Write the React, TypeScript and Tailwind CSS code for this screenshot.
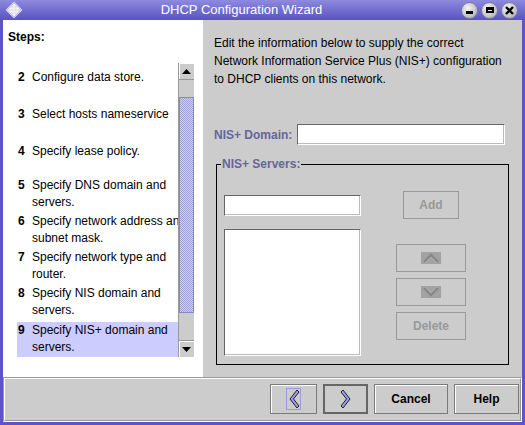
import React from 'react'

const steps = [
  { n: 2, lines: ['Configure data store.'], h: 37 },
  { n: 3, lines: ['Select hosts nameservice'], h: 37 },
  { n: 4, lines: ['Specify lease policy.'], h: 34 },
  { n: 5, lines: ['Specify DNS domain and', 'servers.'], h: 36 },
  { n: 6, lines: ['Specify network address and', 'subnet mask.'], h: 36 },
  { n: 7, lines: ['Specify network type and', 'router.'], h: 36 },
  { n: 8, lines: ['Specify NIS domain and', 'servers.'], h: 37 },
  { n: 9, lines: ['Specify NIS+ domain and', 'servers.'], h: 36, active: true },
]

function WinButton({ children }: { children: React.ReactNode }) {
  return (
    <div className="flex h-[17px] w-[17px] items-center justify-center rounded-full border border-[#7c7aa8] bg-[radial-gradient(circle_at_40%_35%,#f4f4f4,#c4c4c8_60%,#9a9aa4)]">
      {children}
    </div>
  )
}

function Chevron({ dir }: { dir: 'left' | 'right' }) {
  const pts =
    dir === 'left'
      ? '9,1 2,10 9,19 11,17 5.5,10 11,3'
      : '3,1 10,10 3,19 1,17 6.5,10 1,3'
  return (
    <svg width="12" height="20" viewBox="0 0 12 20">
      <polygon points={pts} fill="#9a9af2" stroke="#222" strokeWidth="1" />
    </svg>
  )
}

function ArrowBox({ up }: { up?: boolean }) {
  return (
    <svg width="20" height="12" viewBox="0 0 20 12">
      <rect width="20" height="12" fill="#a2a2a2" />
      <polyline
        points={up ? '3,10 10,3 17,10' : '3,2 10,9 17,2'}
        fill="none"
        stroke="#888"
        strokeWidth="2.4"
      />
      <polyline
        points={up ? '4,11.5 10,5.5 16,11.5' : '4,0.5 10,6.5 16,0.5'}
        fill="none"
        stroke="#b8b8b8"
        strokeWidth="0.8"
      />
    </svg>
  )
}

function DisabledButton({ className, children }: { className: string; children: React.ReactNode }) {
  return (
    <div
      className={`flex items-center justify-center border border-[#999] bg-[#cccccc] text-[12px] font-bold text-[#999] ${className}`}
    >
      {children}
    </div>
  )
}

function Field({ className }: { className: string }) {
  return (
    <div
      className={`border-t border-l border-t-[#666] border-l-[#666] border-r border-b border-r-white border-b-white bg-white shadow-[inset_-1px_-1px_0_#bbb] ${className}`}
    />
  )
}

export default function App() {
  return (
    <div className="flex h-[425px] w-[525px] flex-col bg-[#5d55c4] font-['Liberation_Sans',Arial,sans-serif] text-[12px] text-black">
      {/* title bar */}
      <div className="flex h-[20px] items-center bg-gradient-to-b from-[#8e8ade] to-[#5a52c2] pl-[5px] pr-[7px]">
        <div className="flex h-[17px] w-[17px] items-center justify-center">
          <div className="h-[12px] w-[12px] rotate-45 rounded-[1px] border border-[#d8d8f0] bg-[repeating-conic-gradient(#ffffff_0%_25%,#d4d4e6_0%_50%)] bg-[length:2px_2px]" />
        </div>
        <div className="flex-1 text-center text-[13px] leading-[20px] text-white">
          DHCP Configuration Wizard
        </div>
        <div className="flex gap-[3px]">
          <WinButton>
            <div className="mt-[5px] h-[3px] w-[7px] bg-black" />
          </WinButton>
          <WinButton>
            <div className="h-[6px] w-[8px] border-2 border-t-[3px] border-black" />
          </WinButton>
          <WinButton>
            <svg width="9" height="9" viewBox="0 0 9 9">
              <path d="M1 1 L8 8 M8 1 L1 8" stroke="#000" strokeWidth="2.4" />
            </svg>
          </WinButton>
        </div>
      </div>

      <div className="flex flex-1 flex-col px-[3px] pb-[3px]">
        <div className="flex h-[357px]">
          {/* steps panel */}
          <div className="flex w-[200px] flex-col bg-white">
            <div className="h-[43px] pl-[5px] pt-[10px] text-[12px] font-bold leading-[15px]">Steps:</div>
            <div className="ml-[14px] flex h-[294px]">
              <div className="w-[161px] overflow-hidden pt-[6px]">
                {steps.map((s) => (
                  <div
                    key={s.n}
                    style={{ height: s.h }}
                    className={`flex whitespace-nowrap pl-[1px] leading-[17px] ${s.active ? 'bg-[#ccccff]' : ''}`}
                  >
                    <span className="w-[14px] shrink-0 font-bold">{s.n}</span>
                    <div>
                      {s.lines.map((l) => (
                        <div key={l}>{l}</div>
                      ))}
                    </div>
                  </div>
                ))}
              </div>
              {/* scrollbar */}
              <div className="flex w-[16px] flex-col border-l border-[#999] bg-[#cccccc]">
                <div className="flex h-[17px] items-center justify-center border-b border-[#999] shadow-[inset_1px_1px_0_#fff]">
                  <svg width="9" height="5" viewBox="0 0 9 5">
                    <polygon points="0,5 4.5,0 9,5" fill="#000" />
                  </svg>
                </div>
                <div className="h-[17px]" />
                <div className="h-[216px] border border-[#8886c8] bg-[repeating-conic-gradient(#ccccff_0%_25%,#a0a0dc_0%_50%)] bg-[length:2px_2px]" />
                <div className="flex-1" />
                <div className="flex h-[17px] items-center justify-center border-t border-[#999] shadow-[inset_1px_1px_0_#fff]">
                  <svg width="9" height="5" viewBox="0 0 9 5">
                    <polygon points="0,0 4.5,5 9,0" fill="#000" />
                  </svg>
                </div>
              </div>
            </div>
          </div>

          {/* form panel */}
          <div className="flex flex-1 flex-col bg-[#cccccc]">
            <p className="pl-[11px] pt-[14px] leading-[18px]">
              Edit the information below to supply the correct
              <br />
              Network Information Service Plus (NIS+) configuration
              <br />
              to DHCP clients on this network.
            </p>
            <div className="mt-[36px] flex items-center pl-[11px]">
              <span className="w-[83px] font-bold text-[#666699]">NIS+ Domain:</span>
              <Field className="h-[21px] w-[208px]" />
            </div>
            <fieldset className="ml-[13px] mt-[12px] h-[208px] w-[293px] border border-black">
              <legend className="ml-[4px] px-[1px] font-bold leading-[15px] text-[#666699]">NIS+ Servers:</legend>
              <div className="flex">
                <div className="ml-[7px] flex flex-col gap-[13px] pt-[23px]">
                  <Field className="h-[21px] w-[137px]" />
                  <Field className="h-[127px] w-[137px]" />
                </div>
                <div className="ml-[35px] flex w-[70px] flex-col items-center pt-[19px]">
                  <DisabledButton className="h-[28px] w-[56px]">Add</DisabledButton>
                  <DisabledButton className="mt-[25px] h-[28px] w-[70px]">
                    <ArrowBox up />
                  </DisabledButton>
                  <DisabledButton className="mt-[6px] h-[28px] w-[70px]">
                    <ArrowBox />
                  </DisabledButton>
                  <DisabledButton className="mt-[6px] h-[28px] w-[70px]">Delete</DisabledButton>
                </div>
              </div>
            </fieldset>
          </div>
        </div>

        {/* button bar */}
        <div className="flex-1 border-t border-l border-t-[#999] border-l-[#999] border-r border-b border-r-white border-b-white">
          <div className="flex h-full items-start justify-end gap-[6px] border-t border-l border-t-white border-l-white border-r border-b border-r-[#999] border-b-[#999] bg-[#cccccc] pr-[1px] pt-[5px]">
            <div className="flex h-[30px] w-[47px] items-center justify-center border border-[#7a7a7a] shadow-[inset_1px_1px_0_#fff]">
              <div className="flex h-[22px] w-[15px] items-center justify-center border border-[#9a9ae0]">
                <Chevron dir="left" />
              </div>
            </div>
            <div className="flex h-[30px] w-[45px] items-center justify-center border-2 border-[#666]">
              <Chevron dir="right" />
            </div>
            <div className="flex h-[30px] w-[74px] items-center justify-center border border-[#7a7a7a] font-bold shadow-[inset_1px_1px_0_#fff]">
              Cancel
            </div>
            <div className="flex h-[30px] w-[65px] items-center justify-center border border-[#7a7a7a] font-bold shadow-[inset_1px_1px_0_#fff]">
              Help
            </div>
          </div>
        </div>
      </div>
    </div>
  )
}
